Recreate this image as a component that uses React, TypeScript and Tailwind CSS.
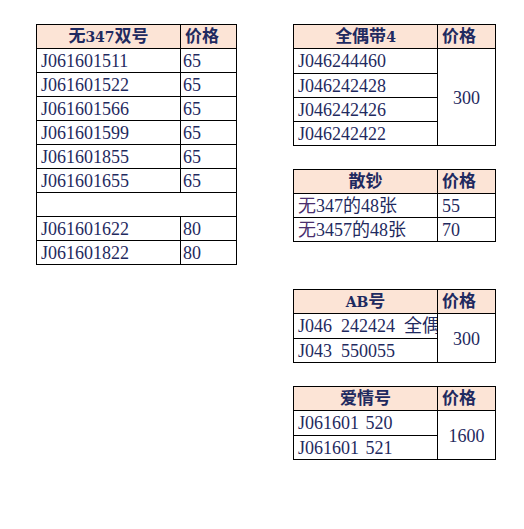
import React from "react";

const serif = "font-['Liberation_Serif','Noto_Sans_CJK_SC',serif]";
const ink = "text-[#1f2a60]";

// Latin bits of the header are set a bit smaller and wider, like the sheet's bold header font
function Head({ text }: { text: string }) {
  const parts = text.split(/([A-Za-z0-9]+)/).filter(Boolean);
  return (
    <>
      {parts.map((p, i) =>
        /[A-Za-z0-9]/.test(p) ? (
          <span key={i} className="font-['DejaVu_Serif',serif] text-[14px]">
            {p}
          </span>
        ) : (
          <span key={i}>{p}</span>
        )
      )}
    </>
  );
}

function HeaderRow({ title, w }: { title: string; w: string }) {
  return (
    <div className={`flex h-[23px] bg-[#fce4d6] font-bold text-[17px] leading-[23px] ${ink}`}>
      <div className={`${w} shrink-0 border-r border-black text-center`}>
        <Head text={title} />
      </div>
      <div className="flex-1 pl-[4px]">价格</div>
    </div>
  );
}

function Cell({ children, first }: { children: React.ReactNode; first?: boolean }) {
  return (
    <div
      className={`h-[24px] overflow-hidden whitespace-pre pl-[4px] pt-[2px] text-[18px] leading-[21px] ${
        first ? "h-[23px]" : "border-t border-black"
      }`}
    >
      {children}
    </div>
  );
}

function MergedTable({ title, items, price }: { title: string; items: React.ReactNode[]; price: string }) {
  return (
    <div className={`w-[203px] border border-black ${serif} ${ink}`}>
      <HeaderRow title={title} w="w-[144px]" />
      <div className="flex border-t border-black">
        <div className="w-[144px] shrink-0 border-r border-black">
          {items.map((it, i) => (
            <Cell key={i} first={i === 0}>
              {it}
            </Cell>
          ))}
        </div>
        <div className="flex flex-1 items-center justify-center text-[18px] pt-[2px]">{price}</div>
      </div>
    </div>
  );
}

const left: [string, string][] = [
  ["J061601511", "65"],
  ["J061601522", "65"],
  ["J061601566", "65"],
  ["J061601599", "65"],
  ["J061601855", "65"],
  ["J061601655", "65"],
  ["", ""],
  ["J061601622", "80"],
  ["J061601822", "80"],
];

export default function App() {
  return (
    <div className="flex min-h-[529px] w-[524px] items-start bg-white pl-[36px] pt-[24px]">
      <div className={`w-[201px] border border-black ${serif} ${ink}`}>
        <HeaderRow title="无347双号" w="w-[144px]" />
        {left.map(([code, price], i) => (
          <div key={i} className="flex h-[24px] border-t border-black text-[18px] leading-[21px]">
            {code ? (
              <>
                <div className="w-[144px] shrink-0 border-r border-black pl-[4px] pt-[2px]">{code}</div>
                <div className="flex-1 pl-[2px] pt-[2px]">{price}</div>
              </>
            ) : (
              <div className="flex-1" />
            )}
          </div>
        ))}
      </div>

      <div className="ml-[56px] flex flex-col">
        <MergedTable
          title="全偶带4"
          items={["J046244460", "J046242428", "J046242426", "J046242422"]}
          price="300"
        />

        <div className={`mt-[23px] w-[203px] border border-black ${serif} ${ink}`}>
          <HeaderRow title="散钞" w="w-[144px]" />
          {[
            ["347的48张", "55"],
            ["3457的48张", "70"],
          ].map(([t, p], i) => (
            <div key={i} className="flex h-[24px] border-t border-black text-[18px] leading-[21px]">
              <div className="w-[144px] shrink-0 whitespace-nowrap border-r border-black pl-[4px] pt-[2px]">
                <span className="text-[#4a2f6e]">无</span>
                {t}
              </div>
              <div className="flex-1 pl-[4px] pt-[2px]">{p}</div>
            </div>
          ))}
        </div>

        <div className="mt-[47px]">
          <MergedTable title="AB号" items={["J046  242424  全偶带4", "J043  550055"]} price="300" />
        </div>

        <div className="mt-[23px]">
          <MergedTable
            title="爱情号"
            items={[
              <span className="[word-spacing:2px]">J061601 520</span>,
              <span className="[word-spacing:2px]">J061601 521</span>,
            ]}
            price="1600"
          />
        </div>
      </div>
    </div>
  );
}
